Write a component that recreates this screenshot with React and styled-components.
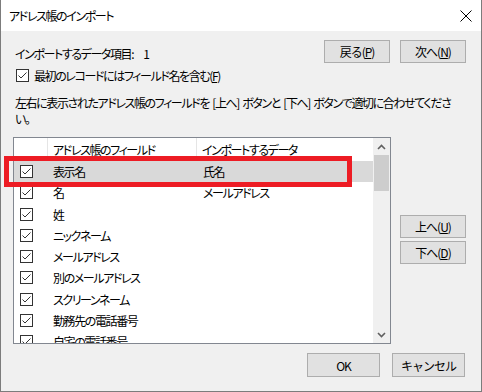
import React from 'react';
import styled, { createGlobalStyle } from 'styled-components';

const GlobalStyle = createGlobalStyle`
  html, body { margin: 0; padding: 0; background: #fff; }
  body {
    font-family: "Noto Sans CJK JP", "Noto Sans", sans-serif;
    font-size: 12px;
    color: #000;
    font-feature-settings: "palt";
    letter-spacing: -1.4px;
  }
`;

const rows = [
  { field: '表示名', data: '氏名', selected: true },
  { field: '名', data: 'メールアドレス' },
  { field: '姓' },
  { field: 'ニックネーム' },
  { field: 'メールアドレス' },
  { field: '別のメールアドレス' },
  { field: 'スクリーンネーム' },
  { field: '勤務先の電話番号' },
  { field: '自宅の電話番号' },
];

const CheckBox = () => (
  <Box>
    <svg width="11" height="11" viewBox="0 0 11 11">
      <polyline points="1.5,5.5 4,8 9.5,2.5" fill="none" stroke="#333" strokeWidth="1" />
    </svg>
  </Box>
);

const Chevron = ({ down }) => (
  <svg width="9" height="6" viewBox="0 0 9 6" style={down ? { transform: 'rotate(180deg)' } : null}>
    <path d="M1 5 L4.5 1.5 L8 5" fill="none" stroke="#606060" strokeWidth="1.6" />
  </svg>
);

const App = () => {
  return (
    <>
      <GlobalStyle />
      <Window>
        <TitleBar>
          <Title>アドレス帳のインポート</Title>
          <svg width="12" height="12" viewBox="0 0 12 12">
            <path d="M0.5 0.5 L11.5 11.5 M11.5 0.5 L0.5 11.5" stroke="#000" strokeWidth="1" />
          </svg>
        </TitleBar>
        <Body>
          <TopRow>
            <Label>インポートするデータ項目:</Label>
            <Count>1</Count>
            <ButtonGroup>
              <Btn>戻る(<u>P</u>)</Btn>
              <Btn>次へ(<u>N</u>)</Btn>
            </ButtonGroup>
          </TopRow>
          <CheckRow>
            <CheckBox />
            <span>最初のレコードにはフィールド名を含む(<u>F</u>)</span>
          </CheckRow>
          <Instruction>
            左右に表示されたアドレス帳のフィールドを [上へ] ボタンと [下へ] ボタンで適切に合わせてくださ
            <br />
            い。
          </Instruction>
          <MainRow>
            <ListWrap>
              <Table>
                <HeaderRow>
                  <HeadCell />
                  <HeadCell $line>アドレス帳のフィールド</HeadCell>
                  <HeadCell $line>インポートするデータ</HeadCell>
                </HeaderRow>
                {rows.map((r) => (
                  <Row key={r.field} $selected={r.selected}>
                    <CheckCell><CheckBox /></CheckCell>
                    <Cell $pad={6}>{r.field}</Cell>
                    <Cell $pad={7}>{r.data}</Cell>
                  </Row>
                ))}
              </Table>
              <ScrollBar>
                <Arrow><Chevron /></Arrow>
                <Thumb />
                <Track />
                <Arrow><Chevron down /></Arrow>
              </ScrollBar>
              <Highlight />
            </ListWrap>
            <SideButtons>
              <Btn>上へ(<u>U</u>)</Btn>
              <Btn>下へ(<u>D</u>)</Btn>
            </SideButtons>
          </MainRow>
          <Footer>
            <Btn $wide>OK</Btn>
            <Btn $wide>キャンセル</Btn>
          </Footer>
        </Body>
      </Window>
    </>
  );
};

const Window = styled.div`
  width: 482px;
  height: 392px;
  box-sizing: border-box;
  border: 1px solid #7c7c7c;
  border-top: none;
  display: flex;
  flex-direction: column;
  background: #f0f0f0;
  overflow: hidden;
`;

const TitleBar = styled.div`
  height: 31px;
  flex-shrink: 0;
  background: #fff;
  display: flex;
  align-items: center;
  justify-content: space-between;
  padding: 0 9px 0 8px;
`;

const Title = styled.div`
  font-size: 12px;
`;

const Body = styled.div`
  flex: 1;
  display: flex;
  flex-direction: column;
  padding: 9px 15px 0 12px;
`;

const TopRow = styled.div`
  display: flex;
  align-items: center;
  height: 23px;
`;

const Label = styled.div`
  margin-left: 2px;
  margin-top: 3px;
`;

const Count = styled.div`
  margin-left: 10px;
  margin-top: 3px;
`;

const ButtonGroup = styled.div`
  margin-left: auto;
  display: flex;
  gap: 10px;
`;

const Btn = styled.button`
  width: ${(p) => (p.$wide ? '73px' : '66px')};
  height: ${(p) => (p.$wide ? '24px' : '23px')};
  box-sizing: border-box;
  padding: 0;
  border: 1px solid #adadad;
  background: #e1e1e1;
  font-family: inherit;
  font-size: 12px;
  letter-spacing: -1px;
  color: #000;
  display: flex;
  align-items: center;
  justify-content: center;
  u { text-underline-offset: 1px; }
`;

const CheckRow = styled.div`
  margin-top: 6px;
  margin-left: 3px;
  height: 13px;
  display: flex;
  align-items: center;
  gap: 5px;
`;

const Box = styled.div`
  width: 13px;
  height: 13px;
  box-sizing: border-box;
  border: 1px solid #333;
  background: #fff;
  display: flex;
  flex-shrink: 0;
`;

const Instruction = styled.div`
  margin-top: 13px;
  margin-left: 2px;
  line-height: 16px;
  white-space: nowrap;
  word-spacing: 2px;
`;

const MainRow = styled.div`
  margin-top: 10px;
  display: flex;
  gap: 9px;
`;

const ListWrap = styled.div`
  position: relative;
  width: 378px;
  height: 207px;
  box-sizing: border-box;
  border: 1px solid #828790;
  background: #fff;
  display: flex;
`;

const Table = styled.div`
  flex: 1;
  overflow: hidden;
`;

const HeaderRow = styled.div`
  display: grid;
  grid-template-columns: 33px 149px 1fr;
  height: 23px;
`;

const HeadCell = styled.div`
  border-left: ${(p) => (p.$line ? '1px solid #e5e5e5' : 'none')};
  padding-left: 5px;
  display: flex;
  align-items: center;
  white-space: nowrap;
`;

const Row = styled.div`
  display: grid;
  grid-template-columns: 33px 149px 1fr;
  height: 21.25px;
  align-items: center;
  background: ${(p) => (p.$selected ? '#d9d9d9' : 'transparent')};
`;

const CheckCell = styled.div`
  padding-left: 6px;
  display: flex;
`;

const Cell = styled.div`
  padding-left: ${(p) => p.$pad}px;
  white-space: nowrap;
`;

const ScrollBar = styled.div`
  width: 17px;
  flex-shrink: 0;
  background: #f0f0f0;
  display: flex;
  flex-direction: column;
`;

const Arrow = styled.div`
  height: 17px;
  display: flex;
  align-items: center;
  justify-content: center;
`;

const Thumb = styled.div`
  height: 36px;
  margin: 0 1px;
  background: #cdcdcd;
`;

const Track = styled.div`
  flex: 1;
`;

const Highlight = styled.div`
  position: absolute;
  left: -10px;
  top: 18px;
  width: 348px;
  height: 31px;
  box-sizing: border-box;
  border: 5px solid #ed1c24;
  pointer-events: none;
`;

const SideButtons = styled.div`
  display: flex;
  flex-direction: column;
  gap: 3px;
  margin-top: 78px;
`;

const Footer = styled.div`
  margin-top: 9px;
  display: flex;
  justify-content: flex-end;
  gap: 12px;
  padding-right: 1px;
`;

export default App;
